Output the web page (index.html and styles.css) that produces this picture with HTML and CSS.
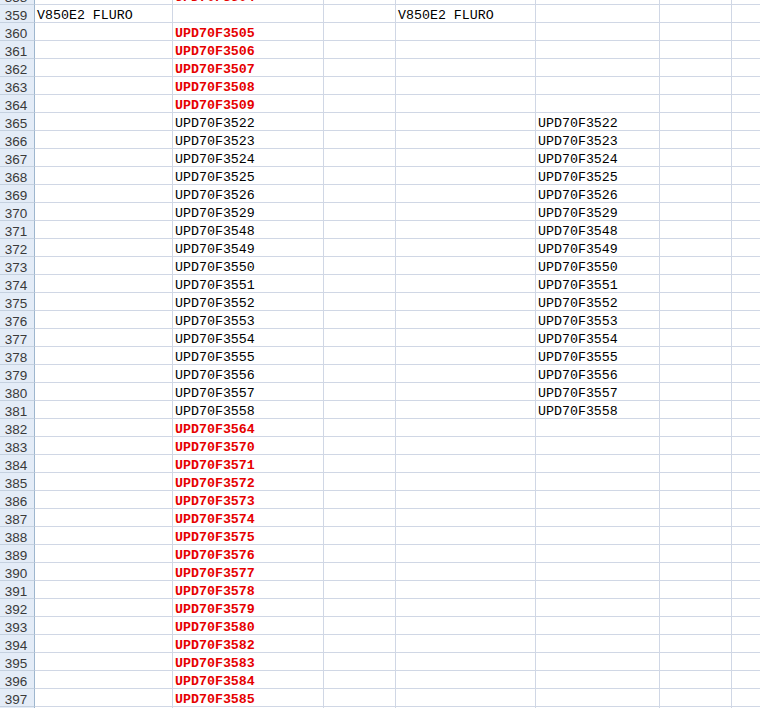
FILE: index.html
```html
<!DOCTYPE html>
<html>
<head>
<meta charset="utf-8">
<link rel="stylesheet" href="styles.css">
</head>
<body>
<div class="sheet">
<div class="row"><div class="hd">358</div><div class="c"></div><div class="c red">UPD70F3504</div><div class="c"></div><div class="c"></div><div class="c"></div><div class="c"></div><div class="c"></div></div>
<div class="row"><div class="hd">359</div><div class="c">V850E2 FLURO</div><div class="c"></div><div class="c"></div><div class="c">V850E2 FLURO</div><div class="c"></div><div class="c"></div><div class="c"></div></div>
<div class="row"><div class="hd">360</div><div class="c"></div><div class="c red">UPD70F3505</div><div class="c"></div><div class="c"></div><div class="c"></div><div class="c"></div><div class="c"></div></div>
<div class="row"><div class="hd">361</div><div class="c"></div><div class="c red">UPD70F3506</div><div class="c"></div><div class="c"></div><div class="c"></div><div class="c"></div><div class="c"></div></div>
<div class="row"><div class="hd">362</div><div class="c"></div><div class="c red">UPD70F3507</div><div class="c"></div><div class="c"></div><div class="c"></div><div class="c"></div><div class="c"></div></div>
<div class="row"><div class="hd">363</div><div class="c"></div><div class="c red">UPD70F3508</div><div class="c"></div><div class="c"></div><div class="c"></div><div class="c"></div><div class="c"></div></div>
<div class="row"><div class="hd">364</div><div class="c"></div><div class="c red">UPD70F3509</div><div class="c"></div><div class="c"></div><div class="c"></div><div class="c"></div><div class="c"></div></div>
<div class="row"><div class="hd">365</div><div class="c"></div><div class="c">UPD70F3522</div><div class="c"></div><div class="c"></div><div class="c">UPD70F3522</div><div class="c"></div><div class="c"></div></div>
<div class="row"><div class="hd">366</div><div class="c"></div><div class="c">UPD70F3523</div><div class="c"></div><div class="c"></div><div class="c">UPD70F3523</div><div class="c"></div><div class="c"></div></div>
<div class="row"><div class="hd">367</div><div class="c"></div><div class="c">UPD70F3524</div><div class="c"></div><div class="c"></div><div class="c">UPD70F3524</div><div class="c"></div><div class="c"></div></div>
<div class="row"><div class="hd">368</div><div class="c"></div><div class="c">UPD70F3525</div><div class="c"></div><div class="c"></div><div class="c">UPD70F3525</div><div class="c"></div><div class="c"></div></div>
<div class="row"><div class="hd">369</div><div class="c"></div><div class="c">UPD70F3526</div><div class="c"></div><div class="c"></div><div class="c">UPD70F3526</div><div class="c"></div><div class="c"></div></div>
<div class="row"><div class="hd">370</div><div class="c"></div><div class="c">UPD70F3529</div><div class="c"></div><div class="c"></div><div class="c">UPD70F3529</div><div class="c"></div><div class="c"></div></div>
<div class="row"><div class="hd">371</div><div class="c"></div><div class="c">UPD70F3548</div><div class="c"></div><div class="c"></div><div class="c">UPD70F3548</div><div class="c"></div><div class="c"></div></div>
<div class="row"><div class="hd">372</div><div class="c"></div><div class="c">UPD70F3549</div><div class="c"></div><div class="c"></div><div class="c">UPD70F3549</div><div class="c"></div><div class="c"></div></div>
<div class="row"><div class="hd">373</div><div class="c"></div><div class="c">UPD70F3550</div><div class="c"></div><div class="c"></div><div class="c">UPD70F3550</div><div class="c"></div><div class="c"></div></div>
<div class="row"><div class="hd">374</div><div class="c"></div><div class="c">UPD70F3551</div><div class="c"></div><div class="c"></div><div class="c">UPD70F3551</div><div class="c"></div><div class="c"></div></div>
<div class="row"><div class="hd">375</div><div class="c"></div><div class="c">UPD70F3552</div><div class="c"></div><div class="c"></div><div class="c">UPD70F3552</div><div class="c"></div><div class="c"></div></div>
<div class="row"><div class="hd">376</div><div class="c"></div><div class="c">UPD70F3553</div><div class="c"></div><div class="c"></div><div class="c">UPD70F3553</div><div class="c"></div><div class="c"></div></div>
<div class="row"><div class="hd">377</div><div class="c"></div><div class="c">UPD70F3554</div><div class="c"></div><div class="c"></div><div class="c">UPD70F3554</div><div class="c"></div><div class="c"></div></div>
<div class="row"><div class="hd">378</div><div class="c"></div><div class="c">UPD70F3555</div><div class="c"></div><div class="c"></div><div class="c">UPD70F3555</div><div class="c"></div><div class="c"></div></div>
<div class="row"><div class="hd">379</div><div class="c"></div><div class="c">UPD70F3556</div><div class="c"></div><div class="c"></div><div class="c">UPD70F3556</div><div class="c"></div><div class="c"></div></div>
<div class="row"><div class="hd">380</div><div class="c"></div><div class="c">UPD70F3557</div><div class="c"></div><div class="c"></div><div class="c">UPD70F3557</div><div class="c"></div><div class="c"></div></div>
<div class="row"><div class="hd">381</div><div class="c"></div><div class="c">UPD70F3558</div><div class="c"></div><div class="c"></div><div class="c">UPD70F3558</div><div class="c"></div><div class="c"></div></div>
<div class="row"><div class="hd">382</div><div class="c"></div><div class="c red">UPD70F3564</div><div class="c"></div><div class="c"></div><div class="c"></div><div class="c"></div><div class="c"></div></div>
<div class="row"><div class="hd">383</div><div class="c"></div><div class="c red">UPD70F3570</div><div class="c"></div><div class="c"></div><div class="c"></div><div class="c"></div><div class="c"></div></div>
<div class="row"><div class="hd">384</div><div class="c"></div><div class="c red">UPD70F3571</div><div class="c"></div><div class="c"></div><div class="c"></div><div class="c"></div><div class="c"></div></div>
<div class="row"><div class="hd">385</div><div class="c"></div><div class="c red">UPD70F3572</div><div class="c"></div><div class="c"></div><div class="c"></div><div class="c"></div><div class="c"></div></div>
<div class="row"><div class="hd">386</div><div class="c"></div><div class="c red">UPD70F3573</div><div class="c"></div><div class="c"></div><div class="c"></div><div class="c"></div><div class="c"></div></div>
<div class="row"><div class="hd">387</div><div class="c"></div><div class="c red">UPD70F3574</div><div class="c"></div><div class="c"></div><div class="c"></div><div class="c"></div><div class="c"></div></div>
<div class="row"><div class="hd">388</div><div class="c"></div><div class="c red">UPD70F3575</div><div class="c"></div><div class="c"></div><div class="c"></div><div class="c"></div><div class="c"></div></div>
<div class="row"><div class="hd">389</div><div class="c"></div><div class="c red">UPD70F3576</div><div class="c"></div><div class="c"></div><div class="c"></div><div class="c"></div><div class="c"></div></div>
<div class="row"><div class="hd">390</div><div class="c"></div><div class="c red">UPD70F3577</div><div class="c"></div><div class="c"></div><div class="c"></div><div class="c"></div><div class="c"></div></div>
<div class="row"><div class="hd">391</div><div class="c"></div><div class="c red">UPD70F3578</div><div class="c"></div><div class="c"></div><div class="c"></div><div class="c"></div><div class="c"></div></div>
<div class="row"><div class="hd">392</div><div class="c"></div><div class="c red">UPD70F3579</div><div class="c"></div><div class="c"></div><div class="c"></div><div class="c"></div><div class="c"></div></div>
<div class="row"><div class="hd">393</div><div class="c"></div><div class="c red">UPD70F3580</div><div class="c"></div><div class="c"></div><div class="c"></div><div class="c"></div><div class="c"></div></div>
<div class="row"><div class="hd">394</div><div class="c"></div><div class="c red">UPD70F3582</div><div class="c"></div><div class="c"></div><div class="c"></div><div class="c"></div><div class="c"></div></div>
<div class="row"><div class="hd">395</div><div class="c"></div><div class="c red">UPD70F3583</div><div class="c"></div><div class="c"></div><div class="c"></div><div class="c"></div><div class="c"></div></div>
<div class="row"><div class="hd">396</div><div class="c"></div><div class="c red">UPD70F3584</div><div class="c"></div><div class="c"></div><div class="c"></div><div class="c"></div><div class="c"></div></div>
<div class="row"><div class="hd">397</div><div class="c"></div><div class="c red">UPD70F3585</div><div class="c"></div><div class="c"></div><div class="c"></div><div class="c"></div><div class="c"></div></div>
<div class="row"><div class="hd"></div><div class="c"></div><div class="c"></div><div class="c"></div><div class="c"></div><div class="c"></div><div class="c"></div><div class="c"></div></div>
</div>
</body>
</html>
```

FILE: styles.css
```css
html, body {
  margin: 0;
  padding: 0;
  background: #ffffff;
  overflow: hidden;
}
.sheet {
  margin-top: -13px;
  width: 760px;
  overflow: hidden;
}
.row {
  display: grid;
  grid-template-columns: 35px 138px 151px 72px 140px 124px 72px 60px;
  height: 18px;
}
.hd {
  box-sizing: border-box;
  height: 18px;
  padding-top: 3px;
  background: #e4ecf7;
  border-right: 1px solid #9eb6ce;
  border-bottom: 1px solid #c5d1e0;
  font-family: "Liberation Sans", Arial, sans-serif;
  font-size: 13.5px;
  color: #3a3a3a;
  text-align: center;
  line-height: 15px;
  padding-right: 2px;
  overflow: hidden;
}
.c {
  box-sizing: border-box;
  height: 18px;
  padding-top: 3px;
  border-right: 1px solid #d0d7e5;
  border-bottom: 1px solid #d0d7e5;
  font-family: "Liberation Mono", "Courier New", monospace;
  font-size: 13.3px;
  line-height: 15px;
  color: #000000;
  padding-left: 2px;
  white-space: nowrap;
  overflow: hidden;
}
.red {
  color: #e60000;
  font-weight: bold;
}
```
